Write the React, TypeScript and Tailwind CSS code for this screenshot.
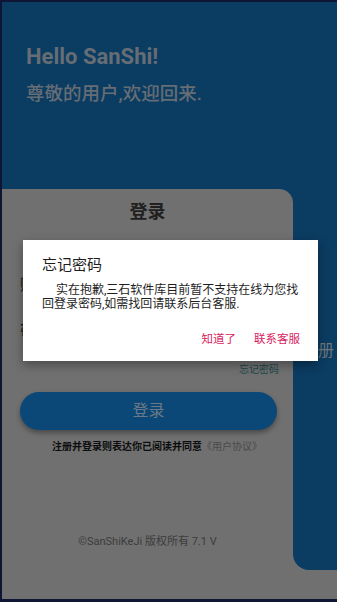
import React from 'react';

const font = { fontFamily: 'Roboto, "Noto Sans CJK SC", "Noto Sans", sans-serif' };

const App: React.FC = () => {
  return (
    <div
      className="w-[337px] h-[602px] overflow-hidden bg-[#0f1534] pt-[2px] pl-[2px] pb-[3px]"
      style={font}
    >
      <div className="relative w-full h-full flex flex-col bg-[#0b3c62]">
        {/* Header */}
        <div className="h-[187px] shrink-0 pl-[24px] pt-[41px]">
          <h1 className="text-[22px] leading-[28px] font-bold text-[#666d75]">Hello SanShi!</h1>
          <p className="mt-[11px] text-[18.5px] leading-[24px] font-medium text-[#666d75]">
            尊敬的用户,欢迎回来.
          </p>
        </div>

        {/* Body: login card + right blue strip */}
        <div className="flex flex-1">
          <div className="w-[291px] shrink-0 bg-[#707070] rounded-tr-[14px] flex flex-col">
            <div className="h-[44px] flex items-center justify-center text-[18px] font-bold text-[#1f1f1f]">
              登录
            </div>
            <div className="mt-[44px] pl-[18px] text-[15px] leading-[16px] font-medium text-[#1f1f1f]">账号</div>
            <div className="mt-[29px] pl-[18px] text-[15px] leading-[16px] font-medium text-[#1f1f1f]">密码</div>
            <div className="mt-[26px] pr-[14px] text-right text-[10px] leading-[12px] text-[#1d4848]">忘记密码</div>
            <button className="mt-[16px] ml-[18px] w-[257px] h-[38px] rounded-full bg-[#0c4877] shadow-[0_3px_5px_rgba(0,0,0,0.35)] text-[16px] text-[#6b7986]">
              登录
            </button>
            <p className="mt-[11px] pl-[50px] text-[10px] leading-[12px] font-bold text-[#0d0d0d]">
              注册并登录则表达你已阅读并同意
              <span className="font-normal text-[#4a4a4a]">《用户协议》</span>
            </p>
            <p className="mt-[82px] text-center text-[11px] leading-[14px] text-[#3c3c3c]">
              ©SanShiKeJi 版权所有 7.1 V
            </p>
          </div>
          <div className="flex-1 flex flex-col bg-[#707070] min-w-0">
            <div className="h-[381px] bg-[#0b3c62] rounded-bl-[16px] pt-[152px] pl-[9px] text-[16px] leading-[20px] text-[#6d757e] overflow-hidden whitespace-nowrap">
              注册
            </div>
          </div>
        </div>

        {/* Dialog overlay */}
        <div className="absolute left-[21px] top-[238px] w-[295px] h-[121px] bg-white shadow-[0_4px_10px_rgba(0,0,0,0.35)] pl-[19px] pr-[14px] pt-[15px]">
          <div className="text-[15px] leading-[20px] text-[#1e1e1e]">忘记密码</div>
          <p className="mt-[8px] text-[12px] leading-[14px] text-[#1e1e1e] indent-[14px]">
            实在抱歉,三石软件库目前暂不支持在线为您找回登录密码,如需找回请联系后台客服.
          </p>
          <div className="mt-[21px] pr-[4px] flex justify-end gap-[18px] text-[11.5px] leading-[14px] text-[#d81b60]">
            <span>知道了</span>
            <span>联系客服</span>
          </div>
        </div>
      </div>
    </div>
  );
};

export default App;
